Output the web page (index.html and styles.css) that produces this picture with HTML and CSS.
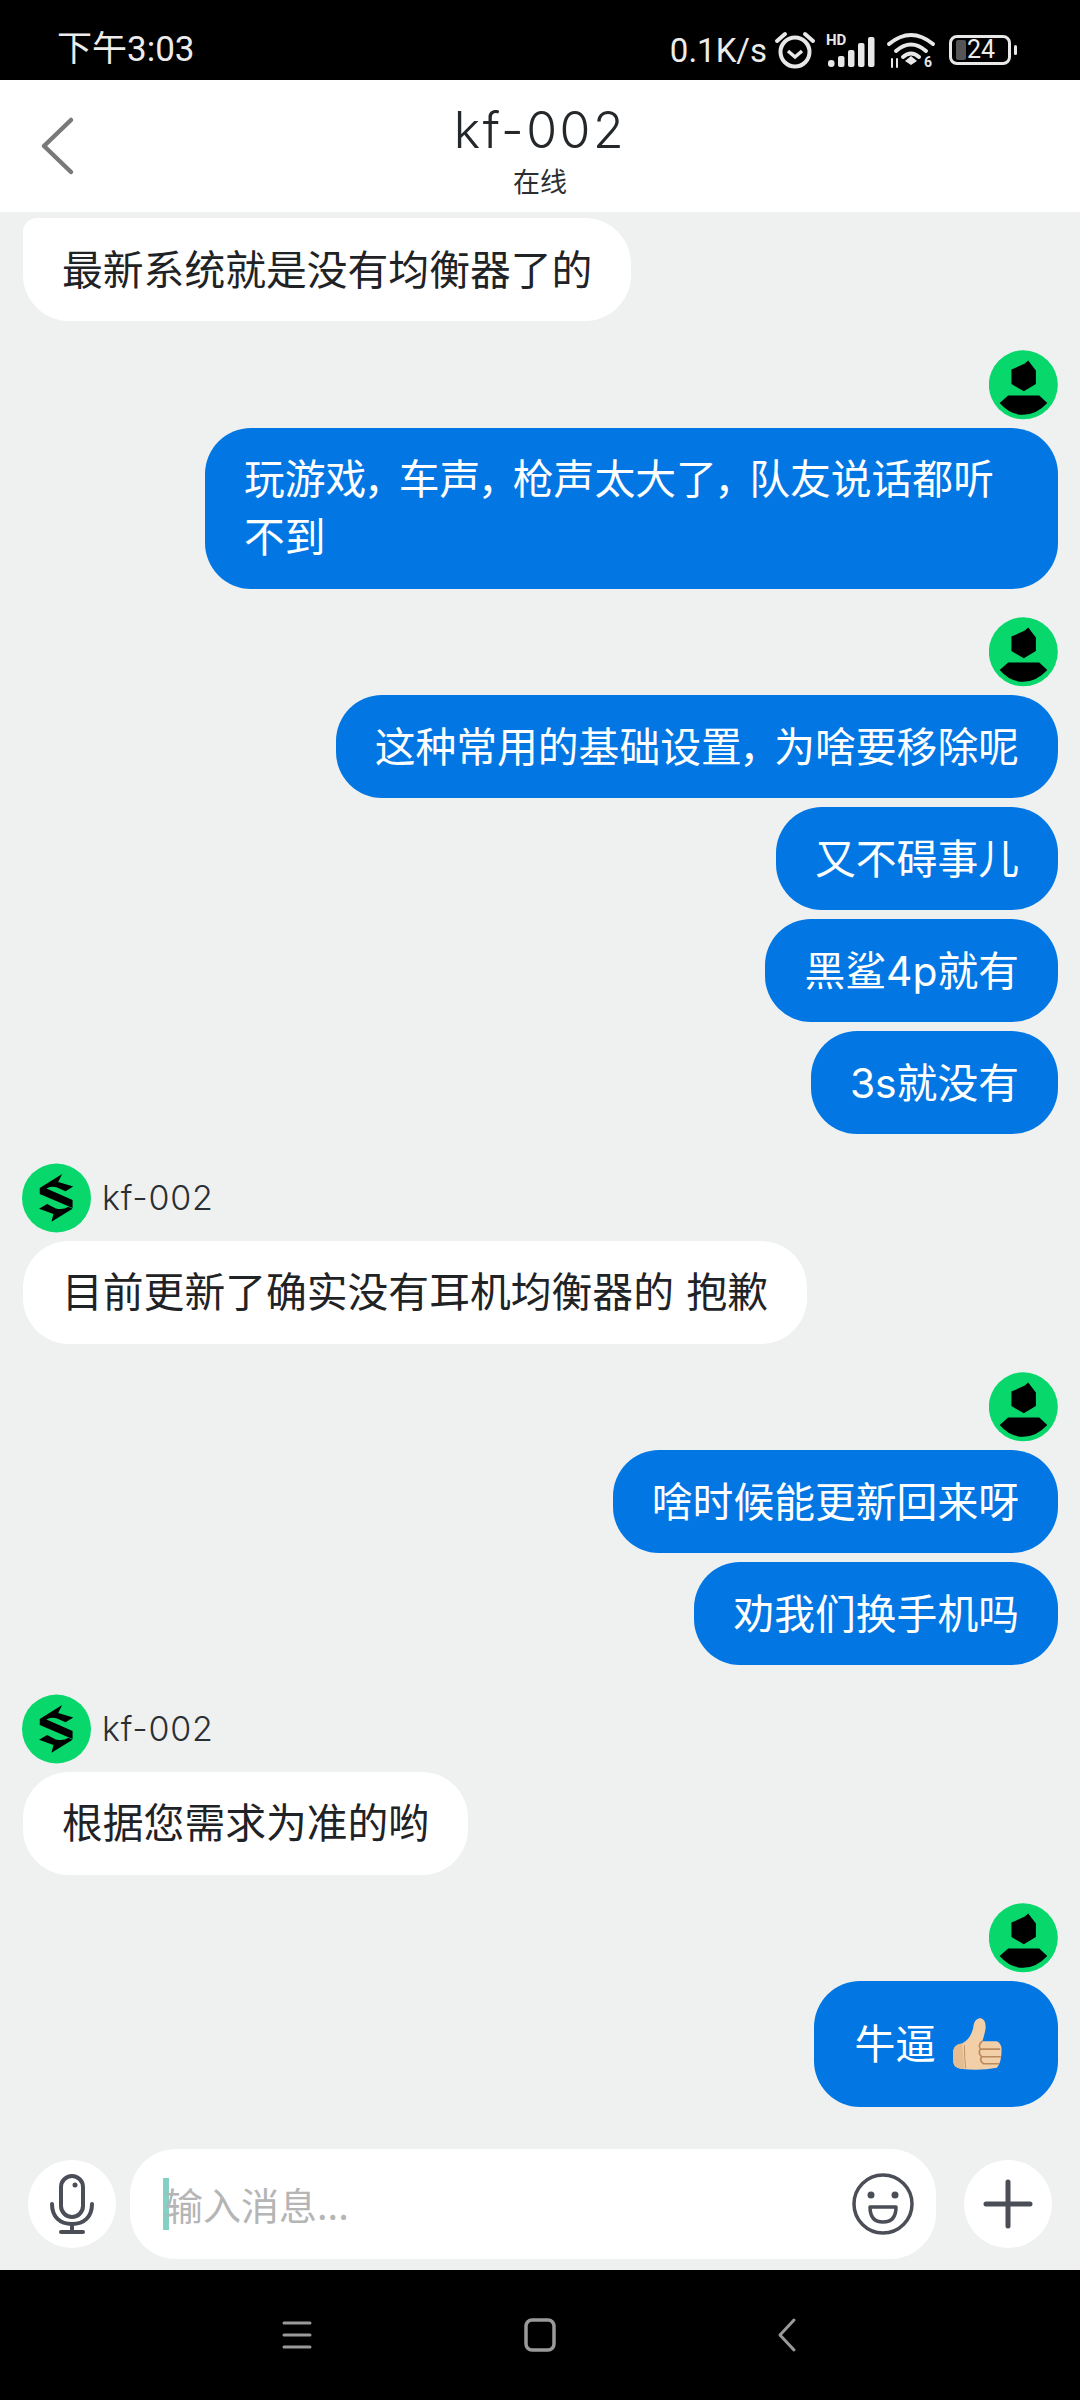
FILE: index.html
```html
<!DOCTYPE html>
<html lang="zh-CN">
<head>
    <meta charset="UTF-8">
    <title>kf-002</title>
    <link rel="stylesheet" href="styles.css">
</head>
<body>
    <svg class="defs" width="0" height="0">
        <symbol id="user-avatar" viewBox="88 35 206 206">
            <circle cx="190.500" cy="137.500" r="103" fill="#08d76b"/>
            <path d="M205 65L228 95V135L192 157L155 135V92L195 74Z" fill="#000"/>
            <path d="M145 169H238L262 192Q230 227 190 227Q150 227 120 192Z" fill="#000"/>
        </symbol>
        <symbol id="kf-avatar" viewBox="67 37 206 206">
            <circle cx="170" cy="140" r="103" fill="#08d76b"/>
            <path d="M120 110L187 68L175 92L220 106L197 120L170 108Q150 104 140 112L218 146V170L120 128Z" fill="#000"/>
            <path d="M118 172L142 158L168 171Q190 176 206 166L218 172L155 211L161 188Z" fill="#000"/>
        </symbol>
    </svg>

    <div class="status-bar">
        <span class="status-time">下午3:03</span>
        <div class="status-right">
            <span class="status-speed">0.1K/s</span>
            <svg class="icon-alarm" width="40" height="38" viewBox="0 0 40 38" fill="none" stroke="#e8e8e8">
                <circle cx="20" cy="21" r="14.500" stroke-width="4"/>
                <path d="M13 20L20 26L27 20" stroke-width="3.500"/>
                <path d="M2 10L10 3M38 10L30 3" stroke-width="4" stroke-linecap="round"/>
            </svg>
            <svg class="icon-signal" width="50" height="34" viewBox="0 0 50 34">
                <text x="0" y="12" class="signal-hd">HD</text>
                <rect x="2" y="27" width="6.500" height="7" rx="3" fill="#e8e8e8"/>
                <rect x="12" y="23" width="6.500" height="11" rx="2" fill="#e8e8e8"/>
                <rect x="22" y="17" width="6.500" height="17" rx="2" fill="#e8e8e8"/>
                <rect x="32" y="10" width="6.500" height="24" rx="2" fill="#e8e8e8"/>
                <rect x="42" y="4" width="6.500" height="30" rx="2" fill="#e8e8e8"/>
            </svg>
            <svg class="icon-wifi" width="48" height="36" viewBox="0 0 48 36" fill="none" stroke="#e8e8e8" stroke-width="4" stroke-linecap="round">
                <path d="M2 12Q24 -6 46 12"/>
                <path d="M9 19Q24 6 39 19"/>
                <path d="M16 25Q24 18 32 25"/>
                <path d="M24 24L30 29L24 33L18 29Z" fill="#e8e8e8" stroke="none"/>
                <path d="M5 27V35M10 27V35" stroke-width="2"/>
                <text x="37" y="35" class="wifi-six">6</text>
            </svg>
            <div class="battery">
                <span class="battery-level"></span>
                <span class="battery-num">24</span>
            </div>
            <span class="battery-tip"></span>
        </div>
    </div>

    <div class="header">
        <svg class="back" width="32" height="56" viewBox="0 0 32 56" fill="none" stroke="#77797a" stroke-width="4.500" stroke-linecap="round" stroke-linejoin="round">
            <path d="M30 2L3 28L30 54"/>
        </svg>
        <div class="title">kf-002</div>
        <div class="subtitle">在线</div>
    </div>

    <div class="chat">
        <div class="group">
            <div class="bubble in clipped">最新系统就是没有均衡器了的</div>
        </div>

        <div class="group out">
            <svg class="avatar"><use href="#user-avatar"/></svg>
            <div class="bubble wide">玩游戏<span class="comma">，</span>车声<span class="comma">，</span>枪声太大了<span class="comma">，</span>队友说话都听<br>不到</div>
        </div>

        <div class="group out">
            <svg class="avatar"><use href="#user-avatar"/></svg>
            <div class="bubble">这种常用的基础设置<span class="comma">，</span>为啥要移除呢</div>
            <div class="bubble">又不碍事儿</div>
            <div class="bubble">黑鲨4p就有</div>
            <div class="bubble">3s就没有</div>
        </div>

        <div class="group">
            <div class="sender">
                <svg class="avatar"><use href="#kf-avatar"/></svg>
                <span class="sender-name">kf-002</span>
            </div>
            <div class="bubble in">目前更新了确实没有耳机均衡器的 抱歉</div>
        </div>

        <div class="group out">
            <svg class="avatar"><use href="#user-avatar"/></svg>
            <div class="bubble">啥时候能更新回来呀</div>
            <div class="bubble">劝我们换手机吗</div>
        </div>

        <div class="group">
            <div class="sender">
                <svg class="avatar"><use href="#kf-avatar"/></svg>
                <span class="sender-name">kf-002</span>
            </div>
            <div class="bubble in">根据您需求为准的哟</div>
        </div>

        <div class="group out">
            <svg class="avatar"><use href="#user-avatar"/></svg>
            <div class="bubble emoji-bubble">牛逼
                <svg class="thumb" width="50" height="52" viewBox="515 168 150 157">
                    <path d="M518 268Q520 248 545 245Q570 232 578 200Q580 170 600 168Q618 172 616 200Q612 222 606 238H650Q664 245 664 262Q665 300 650 318Q600 328 545 322Q520 320 518 300Z" fill="#f3cfa8"/>
                    <path d="M518 268Q520 248 545 245L552 322Q522 322 518 300Z" fill="#e6bc92"/>
                    <path d="M552 250Q552 290 556 320" fill="none" stroke="#c2946a" stroke-width="3"/>
                    <path d="M606 238Q592 250 600 262H660M600 262Q592 275 604 285H662M604 285Q596 298 610 306H656" fill="none" stroke="#b98a5e" stroke-width="5"/>
                </svg>
            </div>
        </div>
    </div>

    <div class="composer">
        <div class="round-btn">
            <svg width="44" height="60" viewBox="0 0 44 60" fill="none" stroke="#4b4e57" stroke-width="4" stroke-linecap="round">
                <rect x="11" y="2" width="22" height="41" rx="11"/>
                <circle cx="25" cy="11" r="2.500" fill="#4b4e57" stroke="none"/>
                <path d="M2 30C2 43 10 50 22 50C34 50 42 43 42 30"/>
                <path d="M22 50V58M11 58H33"/>
            </svg>
        </div>
        <div class="input">
            <span class="caret"></span>
            <span class="placeholder">输入消息...</span>
            <svg class="smile" width="62" height="62" viewBox="0 0 62 62" fill="none" stroke="#4b4e57" stroke-width="3.500">
                <circle cx="31" cy="31" r="29"/>
                <circle cx="19" cy="22" r="3.500" fill="#4b4e57" stroke="none"/>
                <circle cx="43" cy="22" r="3.500" fill="#4b4e57" stroke="none"/>
                <path d="M18 34H44Q44 49 31 49Q18 49 18 34Z" stroke-linejoin="round"/>
            </svg>
        </div>
        <div class="round-btn plus">
            <svg width="50" height="50" viewBox="0 0 50 50" fill="none" stroke="#4b4e57" stroke-width="5" stroke-linecap="round">
                <path d="M25 3V47M3 25H47"/>
            </svg>
        </div>
    </div>

    <div class="nav-bar">
        <svg width="30" height="30" viewBox="0 0 30 30" stroke="#9a9a9a" stroke-width="3" stroke-linecap="round">
            <path d="M2 3H28M2 15H28M2 27H28"/>
        </svg>
        <svg class="nav-home" width="32" height="34" viewBox="0 0 32 34" fill="none" stroke="#9a9a9a" stroke-width="3.500">
            <rect x="2" y="2" width="28" height="30" rx="6"/>
        </svg>
        <svg class="nav-back" width="18" height="34" viewBox="0 0 18 34" fill="none" stroke="#9a9a9a" stroke-width="3" stroke-linecap="round" stroke-linejoin="round">
            <path d="M16 2L2 17L16 32"/>
        </svg>
    </div>
</body>
</html>
```

FILE: styles.css
```css
* {
    box-sizing: border-box;
}
body {
    margin: 0;
    width: 1080px;
    height: 2400px;
    display: flex;
    flex-direction: column;
    overflow: hidden;
    background-color: #eff1f1;
    font-family: "Noto Sans CJK SC", "Noto Sans", sans-serif;
}
svg {
    overflow: visible;
}
.defs {
    position: absolute;
}

/* status bar */
.status-bar {
    height: 80px;
    flex-shrink: 0;
    background-color: #000;
    color: #ececec;
    display: flex;
    justify-content: space-between;
    align-items: flex-end;
    padding: 0 63px 8px 57px;
}
.status-time {
    font-size: 35px;
    line-height: 44px;
    font-family: Roboto, "Noto Sans CJK SC", sans-serif;
}
.status-right {
    display: flex;
    align-items: center;
    height: 44px;
}
.status-speed {
    font-family: Roboto, sans-serif;
    font-size: 33px;
    margin-right: 8px;
}
.icon-alarm {
    margin-right: 11px;
}
.icon-signal {
    margin-right: 11px;
}
.icon-wifi {
    margin-right: 14px;
}
.signal-hd {
    font-family: Roboto, sans-serif;
    font-size: 15px;
    font-weight: 700;
    fill: #e8e8e8;
}
.wifi-six {
    font-family: Roboto, sans-serif;
    font-size: 14px;
    font-weight: 700;
    fill: #e8e8e8;
    stroke: none;
}
.battery {
    width: 62px;
    height: 30px;
    border: 3px solid #e8e8e8;
    border-radius: 8px;
    display: flex;
    align-items: center;
    padding-left: 4px;
}
.battery-level {
    width: 10px;
    height: 20px;
    background-color: #555;
    border-radius: 2px;
}
.battery-num {
    font-family: Roboto, sans-serif;
    font-size: 25px;
    line-height: 24px;
    margin-left: 1px;
}
.battery-tip {
    width: 3px;
    height: 10px;
    margin-left: 3px;
    background-color: #e8e8e8;
    border-radius: 2px;
}

/* header */
.header {
    height: 132px;
    flex-shrink: 0;
    background-color: #fff;
    position: relative;
    text-align: center;
    padding-top: 21px;
}
.back {
    position: absolute;
    left: 41px;
    top: 38px;
}
.title {
    font-family: Inter, sans-serif;
    font-size: 50px;
    font-weight: 300;
    letter-spacing: 2.500px;
    line-height: 58px;
    color: #24282b;
}
.subtitle {
    font-size: 27px;
    line-height: 36px;
    color: #2b2f31;
    margin-top: 4px;
}

/* messages */
.chat {
    flex: 1;
    overflow: hidden;
    padding: 6px 22px 0 23px;
}
.group {
    display: flex;
    flex-direction: column;
    align-items: flex-start;
    margin-bottom: 28.500px;
}
.group.out {
    align-items: flex-end;
}
.avatar {
    width: 69px;
    height: 70px;
    display: block;
}
.sender {
    display: flex;
    align-items: center;
    margin-left: -1px;
}
.sender-name {
    font-family: Inter, sans-serif;
    font-size: 34px;
    font-weight: 300;
    letter-spacing: 0.800px;
    color: #2a2f33;
    margin-left: 11px;
}
.bubble {
    font-family: Inter, "Noto Sans CJK SC", sans-serif;
    font-size: 40.800px;
    word-spacing: 1px;
    line-height: 58px;
    padding: 22.500px 39px;
    border-radius: 46px;
    background-color: #0277e4;
    color: #fff;
    margin-top: 9px;
    white-space: nowrap;
}
.bubble.in {
    background-color: #fff;
    color: #1f2326;
}
.bubble.clipped {
    border-top-left-radius: 14px;
}
.group > .bubble:first-child {
    margin-top: 0;
}
.avatar + .bubble,
.sender + .bubble {
    margin-top: 8px;
}
.bubble.wide {
    width: 853px;
    white-space: normal;
}
.comma {
    font-feature-settings: "palt";
    padding-right: 12px;
}
.emoji-bubble {
    padding-top: 34px;
    padding-bottom: 34px;
    padding-left: 40px;
    padding-right: 56px;
    display: flex;
    align-items: center;
    gap: 16px;
}
.thumb {
    display: block;
}

/* input row */
.composer {
    height: 121px;
    flex-shrink: 0;
    display: flex;
    align-items: center;
    padding: 0 28px 11px;
    gap: 14px;
}
.round-btn {
    width: 88px;
    height: 88px;
    flex-shrink: 0;
    border-radius: 50%;
    background-color: #fff;
    display: flex;
    align-items: center;
    justify-content: center;
}
.round-btn.plus {
    margin-left: 14px;
}
.input {
    flex: 1;
    height: 110px;
    border-radius: 46px;
    background-color: #fff;
    display: flex;
    align-items: center;
    padding: 0 22px 0 33px;
}
.caret {
    width: 6px;
    height: 52px;
    background-color: #85cfc4;
    margin-right: -4px;
}
.placeholder {
    flex: 1;
    font-size: 38px;
    color: #b5b5b5;
    padding-bottom: 2px;
}

/* bottom nav */
.nav-bar {
    height: 130px;
    flex-shrink: 0;
    background-color: #000;
    display: flex;
    align-items: center;
    padding-left: 282px;
}
.nav-home {
    margin-left: 212px;
}
.nav-back {
    margin-left: 222px;
}
```
